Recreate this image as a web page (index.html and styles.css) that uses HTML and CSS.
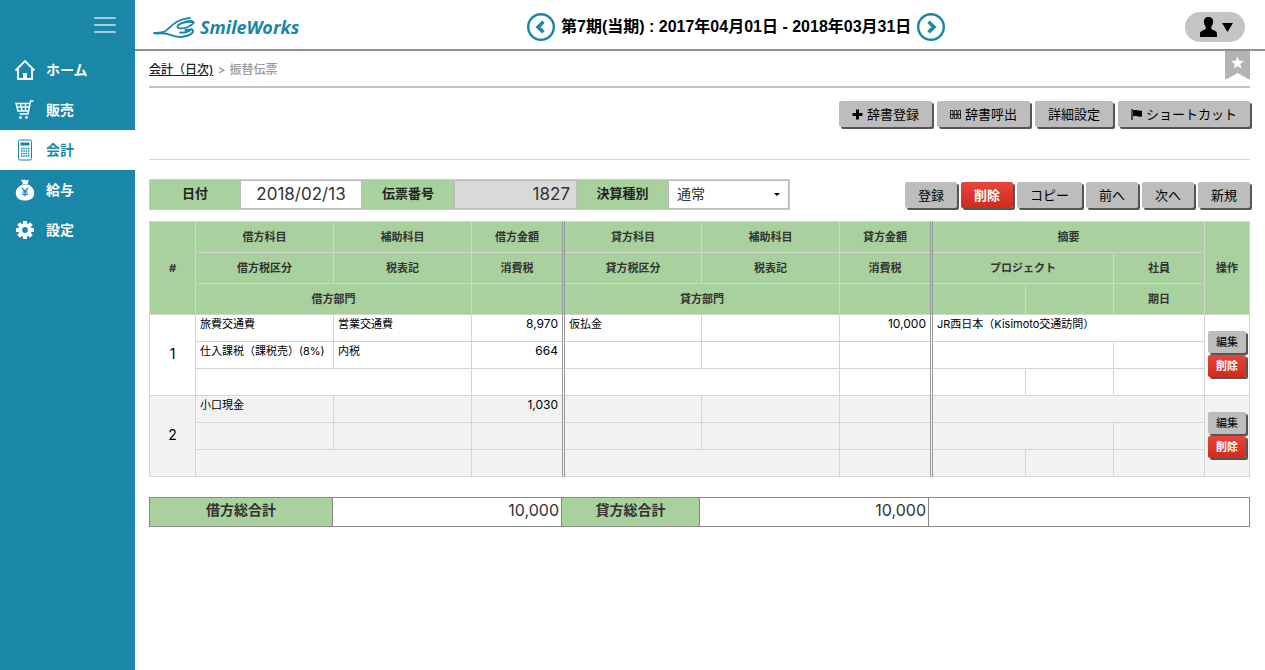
FILE: index.html
```html
<!DOCTYPE html>
<html lang="ja">
<head>
<meta charset="utf-8">
<title>振替伝票 - SmileWorks</title>
<link rel="stylesheet" href="styles.css">
</head>
<body>
<div class="app">
  <aside class="sidebar">
    <div class="sidebar-top">
      <button class="menu-toggle" type="button" aria-label="メニュー"><span></span><span></span><span></span></button>
    </div>
    <nav class="nav">
      <a class="nav-item" href="#">
        <svg class="nav-icon" viewBox="0 0 22 22"><path d="M1.500 11.500L11 2l9.500 9.500M4 9.500V20h14V9.500" fill="none" stroke="currentColor" stroke-width="1.800"/><path d="M9 14h4v6H9z" fill="currentColor"/></svg>
        <span>ホーム</span>
      </a>
      <a class="nav-item" href="#">
        <svg class="nav-icon" viewBox="0 0 22 22"><path d="M19.500 2h-3l-2.500 13H5.500M2 4.500h14L14.500 12H4zM3 8h12M6.500 4.500L8 12M11.500 4.500V12" fill="none" stroke="currentColor" stroke-width="1.400"/><circle cx="6.500" cy="18.500" r="1.400" fill="currentColor"/><circle cx="12.500" cy="18.500" r="1.400" fill="currentColor"/></svg>
        <span>販売</span>
      </a>
      <a class="nav-item active" href="#">
        <svg class="nav-icon" viewBox="0 0 22 22"><rect x="4.500" y="1" width="13" height="20" rx="1.500" fill="none" stroke="currentColor" stroke-width="1"/><rect x="6.500" y="3.500" width="9" height="3" fill="currentColor"/><path d="M7 9.500h9M7 12h9M7 14.500h9M7 17h9" stroke="currentColor" stroke-width="1.500" stroke-dasharray="1.500 .8"/></svg>
        <span>会計</span>
      </a>
      <a class="nav-item" href="#">
        <svg class="nav-icon" viewBox="0 0 22 22"><path d="M7 .5c2 1 3 0 4.500.5 1.500.5 2.500.5 3.500-.5l-1.500 4.500H9zM8.500 5.500h5.500c4 2 6.200 4.500 6.200 8.500 0 5-3.700 7.500-9.200 7.500S1.800 19 1.800 14c0-4 2.700-6.500 6.700-8.500z" fill="currentColor"/><path d="M8 9l3 3.500L14 9M11 12.500V17.500M8 13h6M8 15.300h6" fill="none" stroke="#1a87a9" stroke-width="1.200"/></svg>
        <span>給与</span>
      </a>
      <a class="nav-item" href="#">
        <svg class="nav-icon" viewBox="0 0 22 22"><circle cx="11" cy="11" r="4.800" fill="none" stroke="currentColor" stroke-width="3.800"/><path d="M11 2v3M11 17v3M2 11h3M17 11h3M4.600 4.600l2.200 2.200M15.200 15.200l2.200 2.200M4.600 17.400l2.200-2.200M15.200 6.800l2.200-2.200" stroke="currentColor" stroke-width="4"/></svg>
        <span>設定</span>
      </a>
    </nav>
  </aside>

  <div class="page">
    <header class="header">
      <a class="logo" href="#">
        <svg class="logo-mark" viewBox="0 0 46 24"><path d="M1 17.800c4 0 8 .2 11-1.500C18 12.500 22 4 37 3" stroke-width="1.800"/><path d="M1.500 18.300c6 .3 10-.5 15 1.300 5 2 8 2.800 13 2.200 7-.8 12-4 10-7-1-1.500-4 .5-7 .3" stroke-width="2"/><path d="M41 7.500C35 6 26 8 24.500 11c-1.300 3 6 3 10 1.200 4-1.700 7-4.500 5.500-5.700-3-1.800-12 .5-15.500 4.500M27 17.500c4 .5 8-.5 11-3" stroke-width="1.800"/></svg>
        <span class="logo-text">SmileWorks</span>
      </a>
      <div class="period">
        <button class="round-button" type="button" aria-label="前の期"><svg viewBox="0 0 28 28"><circle cx="14" cy="14" r="12.800"/><path d="M16.500 8.800L11 14l5.500 5.200"/></svg></button>
        <span>第7期(当期) : 2017年04月01日 - 2018年03月31日</span>
        <button class="round-button" type="button" aria-label="次の期"><svg viewBox="0 0 28 28"><circle cx="14" cy="14" r="12.800"/><path d="M11.500 8.800L17 14l-5.500 5.200"/></svg></button>
      </div>
      <button class="user-button" type="button" aria-label="ユーザー">
        <svg viewBox="0 0 34 22"><path d="M9.500 1c3 0 4.800 2 4.600 5-.1 2-.8 3-1.600 4.500-.5 1.500-.3 2.500.5 3 2 1 5 1.500 5 4V21H1v-3.500c0-2.500 3-3 5-4 .8-.5 1-1.500.5-3C5.700 9 5 8 4.900 6 4.700 3 6.500 1 9.500 1zM23 7h11l-5.500 9z"/></svg>
      </button>
    </header>

    <main class="content">
      <div class="crumb-bar">
        <div class="crumbs"><a href="#">会計（日次)</a><span>&gt;</span><span>振替伝票</span></div>
        <button class="bookmark" type="button" aria-label="お気に入り"><svg viewBox="0 0 25 29"><path d="M0 0h25v27q0 2-2 1l-10.500-6L2 28q-2 1-2-1z" fill="#b3b3b3"/><path d="M12.500 5.500l1.700 4.300 4.600.3-3.500 3 1.100 4.500-3.900-2.500-3.900 2.500 1.100-4.500-3.500-3 4.600-.3z" fill="#fff"/></svg></button>
      </div>

      <div class="toolbar">
        <button class="btn" type="button"><svg class="glyph" viewBox="0 0 11 11"><path d="M5.500.5v10M.5 5.500h10" stroke="#000" stroke-width="3"/></svg>辞書登録</button>
        <button class="btn" type="button"><svg class="glyph" viewBox="0 0 11 11"><path d="M.5 1.500h2.500v8H.5zM4.300 1.500h2.500v8H4.300zM8 1.500h2.500v8H8zM.5 5.500h10" fill="none" stroke="#000" stroke-width=".8"/></svg>辞書呼出</button>
        <button class="btn" type="button">詳細設定</button>
        <button class="btn" type="button"><svg class="glyph" viewBox="0 0 11 11"><path d="M1 0v11" stroke="#000" stroke-width="1.200"/><path d="M2 1.500c3-1.500 4 .8 9 0v6c-4 1-6-1.500-9 0z"/></svg>ショートカット</button>
      </div>

      <div class="slip-bar">
        <div class="slip-fields">
          <label class="field-label" for="date">日付</label>
          <div class="field"><input id="date" class="date" type="text" value="2018/02/13"></div>
          <label class="field-label" for="number">伝票番号</label>
          <div class="field"><input id="number" class="number" type="text" value="1827" readonly></div>
          <label class="field-label" for="kind">決算種別</label>
          <div class="field select"><select id="kind"><option>通常</option></select></div>
        </div>
        <div class="actions">
          <button class="btn" type="button">登録</button>
          <button class="btn danger" type="button">削除</button>
          <button class="btn" type="button">コピー</button>
          <button class="btn" type="button">前へ</button>
          <button class="btn" type="button">次へ</button>
          <button class="btn" type="button">新規</button>
        </div>
      </div>

      <table class="journal">
        <colgroup><col class="c-no"><col class="c-name"><col class="c-name"><col class="c-amount"><col class="c-name"><col class="c-name"><col class="c-amount"><col class="c-proj-a"><col class="c-proj-b"><col class="c-staff"><col class="c-ops"></colgroup>
        <thead>
          <tr><th rowspan="3">#</th><th>借方科目</th><th>補助科目</th><th>借方金額</th><th class="split">貸方科目</th><th>補助科目</th><th>貸方金額</th><th class="split" colspan="3">摘要</th><th rowspan="3">操作</th></tr>
          <tr><th>借方税区分</th><th>税表記</th><th>消費税</th><th class="split">貸方税区分</th><th>税表記</th><th>消費税</th><th class="split" colspan="2">プロジェクト</th><th>社員</th></tr>
          <tr><th colspan="2">借方部門</th><th></th><th class="split" colspan="2">貸方部門</th><th></th><th class="split"></th><th></th><th>期日</th></tr>
        </thead>
        <tbody>
          <tr><td class="no" rowspan="3">1</td><td>旅費交通費</td><td>営業交通費</td><td class="num">8,970</td><td class="split">仮払金</td><td></td><td class="num">10,000</td><td class="split" colspan="3">JR西日本（Kisimoto交通訪問）</td><td class="ops" rowspan="3"><button class="btn small" type="button">編集</button><button class="btn small danger" type="button">削除</button></td></tr>
          <tr><td>仕入課税（課税売）(8%)</td><td>内税</td><td class="num">664</td><td class="split"></td><td></td><td></td><td class="split" colspan="2"></td><td></td></tr>
          <tr><td colspan="2"></td><td></td><td class="split" colspan="2"></td><td></td><td class="split"></td><td></td><td></td></tr>
        </tbody>
        <tbody class="even">
          <tr><td class="no" rowspan="3">2</td><td>小口現金</td><td></td><td class="num">1,030</td><td class="split"></td><td></td><td></td><td class="split" colspan="3"></td><td class="ops" rowspan="3"><button class="btn small" type="button">編集</button><button class="btn small danger" type="button">削除</button></td></tr>
          <tr><td></td><td></td><td></td><td class="split"></td><td></td><td></td><td class="split" colspan="2"></td><td></td></tr>
          <tr><td colspan="2"></td><td></td><td class="split" colspan="2"></td><td></td><td class="split"></td><td></td><td></td></tr>
        </tbody>
      </table>

      <table class="totals">
        <colgroup><col class="t-debit"><col class="t-amount"><col class="t-credit"><col class="t-amount"><col class="t-rest"></colgroup>
        <tr><th>借方総合計</th><td>10,000</td><th>貸方総合計</th><td>10,000</td><td></td></tr>
      </table>
    </main>
  </div>
</div>
</body>
</html>
```
FILE: styles.css
```css
* { box-sizing: border-box; }
body {
  margin: 0;
  background: #fff;
  color: #000;
  font: 12px/18px Inter, "Noto Sans CJK JP", sans-serif;
}
button, input, select { font-family: inherit; }
button { padding: 0; border: 0; background: none; cursor: pointer; }
svg { display: block; }

.app { display: flex; min-height: 100vh; }
.sidebar { flex: 0 0 135px; background: #1a87a9; }
.sidebar-top { display: flex; justify-content: flex-end; align-items: center; height: 50px; padding-right: 19px; }
.menu-toggle { display: flex; flex-direction: column; gap: 5px; width: 22px; }
.menu-toggle span { height: 2px; border-radius: 1px; background: #a3cfdd; }
.nav-item {
  display: flex;
  align-items: center;
  gap: 10px;
  height: 40px;
  padding-left: 14px;
  color: #fff;
  font-size: 14px;
  font-weight: bold;
  text-decoration: none;
}
.nav-item.active { background: #fff; color: #1a87a9; }
.nav-icon { width: 22px; height: 22px; }

.page { flex: 1; min-width: 0; }
.header {
  display: grid;
  grid-template-columns: 374px auto 1fr;
  align-items: center;
  height: 51px;
  padding: 4px 20px 0 18px;
  border-bottom: 2px solid #8f8f8f;
}
.logo { display: flex; align-items: center; gap: 1px; color: #1a87a9; text-decoration: none; }
.logo-mark { width: 46px; height: 24px; fill: none; stroke: currentColor; stroke-linecap: round; }
.logo-text { font: italic bold 18px/24px "Noto Sans", sans-serif; }
.period { display: flex; align-items: center; gap: 6px; font: bold 16px/20px "Liberation Sans", "Noto Sans CJK JP", sans-serif; white-space: nowrap; }
.round-button { width: 28px; height: 28px; }
.round-button svg { fill: none; stroke: #1a87a9; stroke-width: 2.4; }
.round-button path { stroke-width: 3.4; }
.user-button { display: flex; align-items: center; justify-self: end; height: 30px; padding: 0 12px 0 14px; border-radius: 15px; background: #c4c4c4; }
.user-button svg { width: 34px; height: 22px; }

.content { padding: 0 15px 20px 14px; }
.crumb-bar { display: flex; justify-content: space-between; height: 37px; border-bottom: 2px solid #c2c2c2; }
.crumbs { display: flex; gap: 4px; padding-top: 10px; color: #999; font-weight: 500; }
.crumbs a { color: #222; }
.bookmark { width: 25px; height: 29px; }

.toolbar { display: flex; justify-content: flex-end; align-items: flex-start; gap: 5px; height: 72px; padding-top: 13px; border-bottom: 1px solid #d4d4d4; }
.btn {
  display: flex;
  align-items: center;
  justify-content: center;
  gap: 4px;
  height: 26px;
  padding: 0 13px;
  border-radius: 2px;
  background: #bdbdbd;
  box-shadow: 2px 2px 0 #555;
  color: #000;
  font-size: 13px;
  line-height: 18px;
}
.btn.danger { background: linear-gradient(#e8463c, #cf2a1c); color: #fff; font-weight: bold; }
.btn.small { width: 38px; height: 22px; padding: 0; font-size: 11px; }
.glyph { width: 11px; height: 11px; }

.slip-bar { display: flex; justify-content: space-between; margin-top: 19px; }
.slip-fields { display: grid; grid-template-columns: 90px 122px 92px 123px 91px 121px; height: 31px; border: 1px solid #ccc; }
.field-label { display: flex; align-items: center; justify-content: center; padding-bottom: 3px; background: #a8d19d; color: #222; font-weight: bold; font-size: 13px; }
.field input, .field select {
  display: block;
  width: 100%;
  height: 29px;
  padding: 0 6px 2px;
  border: 1px solid #bbb;
  border-radius: 0;
  background: #fff;
  color: #333;
  font-size: 17px;
}
.field .date { text-align: center; }
.field .number { background: #d9d9d9; text-align: right; }
.field select { appearance: none; padding: 0 8px 2px; font-size: 14px; }
.select { position: relative; }
.select::after { content: ""; position: absolute; right: 9px; top: 13px; border: 3px solid transparent; border-top-color: #000; pointer-events: none; }
.actions { display: flex; gap: 4px; padding-top: 3px; }

table { width: 100%; border-collapse: collapse; table-layout: fixed; }
.journal { margin-top: 11px; font-size: 11px; line-height: 16px; }
.journal th, .journal td { border: 1px solid #d4d4d4; }
.journal th { height: 31px; padding: 0; background: #a8d19d; color: #333; }
.journal td { height: 27px; padding: 1px 4px; vertical-align: top; white-space: nowrap; }
.journal .split { border-left: 3px double #999; }
.journal .num { text-align: right; font-size: 12px; }
.journal .no { padding-bottom: 3px; text-align: center; vertical-align: middle; font-size: 14px; }
.journal .ops { padding: 0 3px 3px; vertical-align: middle; }
.even { background: #f2f2f2; }
.ops .btn + .btn { margin-top: 2px; }
.c-no { width: 46px; }
.c-name { width: 138px; }
.c-amount { width: 92px; }
.c-proj-a { width: 94px; }
.c-proj-b { width: 88px; }
.c-staff { width: 91px; }
.c-ops { width: 45px; }

.totals { margin-top: 20px; font-size: 16px; line-height: 20px; }
.totals th, .totals td { height: 29px; padding: 0 2px 4px; border: 1px solid #888; color: #333; }
.totals th { background: #a8d19d; font-size: 14px; }
.totals td { text-align: right; }
.t-debit { width: 183px; }
.t-amount { width: 229px; }
.t-credit { width: 138px; }
.t-rest { width: 321px; }
```
